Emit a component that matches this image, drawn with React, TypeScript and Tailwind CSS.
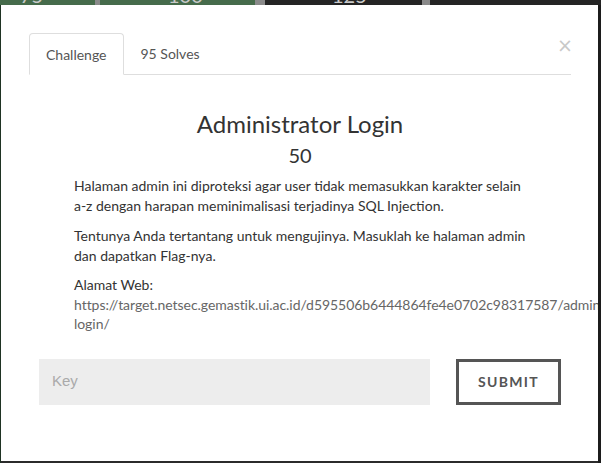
import React from "react";

export default function App() {
  const url =
    "https://target.netsec.gemastik.ui.ac.id/d595506b6444864fe4e0702c98317587/admin-login/";
  return (
    <div
      className="w-[601px] h-[463px] overflow-hidden bg-[#2b2b2b] flex flex-col"
      style={{ fontFamily: "Lato, 'Open Sans', sans-serif" }}
    >
      {/* background strip */}
      <div className="h-[5px] flex shrink-0 overflow-hidden text-[#c9c9c9] text-[20px] leading-none">
        <div className="w-[95px] bg-[#466b4b] relative">
          <span className="absolute left-[20px] top-[-15px]">75</span>
        </div>
        <div className="w-[5px] bg-[#8a8a8a]" />
        <div className="w-[155px] bg-[#466b4b] relative">
          <span className="absolute left-[68px] top-[-15px]">100</span>
        </div>
        <div className="w-[10px] bg-[#8a8a8a]" />
        <div className="w-[157px] bg-[#242424] relative">
          <span className="absolute left-[67px] top-[-15px]">125</span>
        </div>
        <div className="w-[8px] bg-[#8a8a8a]" />
        <div className="flex-1 bg-[#242424]" />
      </div>
      <div className="flex flex-1">
        <div className="w-[1px] bg-[#1f3323]" />
        <div className="relative w-[597px] h-[456px] bg-white overflow-hidden">
          <button
            className="absolute left-[556px] top-[31px] text-[19px] leading-none text-[#c8c8c8]"
            style={{ fontFamily: "'DejaVu Sans', sans-serif" }}
          >
            ×
          </button>
          <div className="pt-[28px] pl-[28px] pr-[27px]">
            <div className="flex border-b border-[#dedede] text-[14px] text-[#555]">
              <div className="h-[42px] px-[16px] flex items-center border border-[#dedede] border-b-white rounded-t-[4px] -mb-px bg-white">
                Challenge
              </div>
              <div className="h-[41px] px-[17px] flex items-center text-[#555]">
                95 Solves
              </div>
            </div>
          </div>
          <div className="pl-[28px] pr-[27px] text-center text-[#333]">
            <h3 className="mt-[36px] text-[24px] leading-[26px]">Administrator Login</h3>
            <div className="mt-[7px] text-[20px] leading-[22px]">50</div>
          </div>
          <div className="ml-[73px] w-[458px] mt-[10px] text-[14px] leading-[20px] text-[#333]">
            <p className="mb-[10px]">
              Halaman admin ini diproteksi agar user tidak memasukkan karakter selain a-z dengan
              harapan meminimalisasi terjadinya SQL Injection.
            </p>
            <p className="mb-[9px]">
              Tentunya Anda tertantang untuk mengujinya. Masuklah ke halaman admin dan dapatkan
              Flag-nya.
            </p>
            <p className="leading-[19.5px]">
              Alamat Web:
              <br />
              <span className="text-[#666] tracking-[-0.05px]">{url}</span>
            </p>
          </div>
          <div className="flex mt-[25px] pl-[38px] gap-[26px]">
            <div
              className="w-[391px] h-[46px] bg-[#ededed] flex items-center pl-[13px] text-[15px] text-[#aaa]"
              style={{ fontFamily: "'Liberation Sans', Arial, sans-serif" }}
            >
              Key
            </div>
            <button className="w-[105px] h-[46px] border-[3px] border-[#555] text-[#555] text-[14px] font-bold tracking-[1.3px] flex items-center justify-center">
              SUBMIT
            </button>
          </div>
        </div>
        <div className="flex-1 bg-[#1c1c1c]" />
      </div>
    </div>
  );
}
